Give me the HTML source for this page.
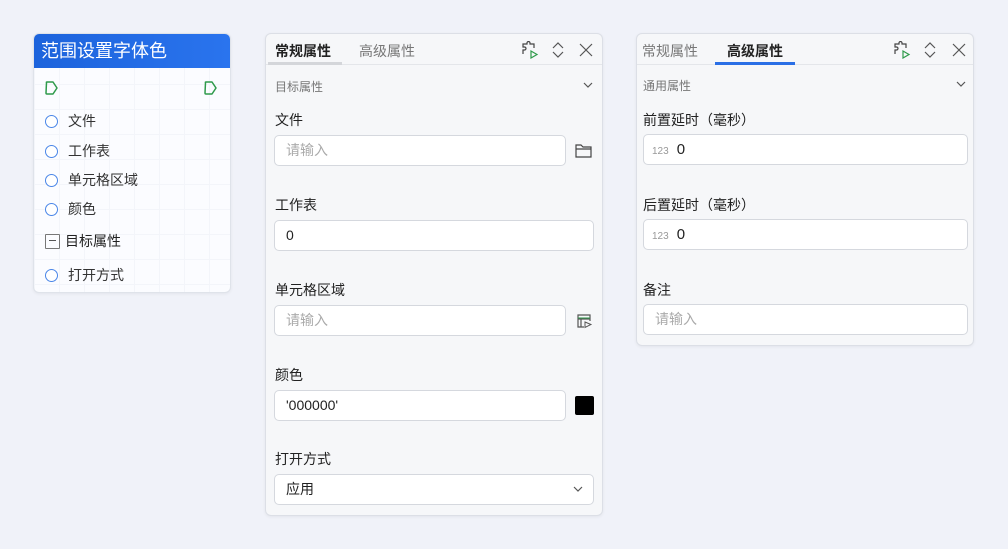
<!DOCTYPE html>
<html><head><meta charset="utf-8"><style>
*{box-sizing:border-box;margin:0;padding:0}
body{width:1008px;height:549px;background:#f0f2f9;font-family:"Liberation Sans","Noto Sans CJK SC",sans-serif;position:relative;overflow:hidden;color:#333}
.abs{position:absolute}
.node{left:33px;top:33px;width:198px;height:260px;border:1px solid #dfe3ea;border-radius:6px;background-color:#fbfcff;background-image:linear-gradient(#f3f5fa 1px,transparent 1px),linear-gradient(90deg,#f3f5fa 1px,transparent 1px);background-size:25px 25px;overflow:hidden;box-shadow:0 1px 3px rgba(0,0,0,.06)}
.nh{height:34px;background:linear-gradient(90deg,#1c63dc,#2a74ee);color:#fff;font-size:18px;line-height:34px;padding-left:7px}
.row{position:absolute;left:11px;font-size:14px;color:#333;display:flex;align-items:center}
.circ{width:13px;height:13px;border:1.5px solid #4a86e8;border-radius:50%;margin-right:10px;background:#fff}
.panel{border:1px solid #dcdfe6;border-radius:6px;background:#f6f7f9;box-shadow:0 1px 3px rgba(0,0,0,.06)}
.tabs{height:31px;border-bottom:1px solid #e4e6ea;position:relative}
.tab{position:absolute;top:7px;font-size:14px;color:#777}
.tab.on{color:#222;font-weight:bold}
.sec{position:absolute;left:9px;font-size:12px;color:#777}
.lbl{position:absolute;left:9px;font-size:14px;color:#222}
.inp{position:absolute;left:8px;height:31px;border:1px solid #d5d8de;border-radius:5px;background:#fff;font-size:14px;line-height:29px;padding-left:11px;color:#222}
.ph{color:#aaa}
</style></head><body>
<div class="abs node">
 <div class="nh">范围设置字体色</div>
 <svg class="abs" style="left:10px;top:46px" width="16" height="16"><path d="M2.5 2.5Q2 2 3 2h6l4 6-4 6H3q-1 0-1-1z" fill="none" stroke="#2e9a4a" stroke-width="1.5" stroke-linejoin="round"/></svg>
 <svg class="abs" style="left:169px;top:46px" width="16" height="16"><path d="M2.5 2.5Q2 2 3 2h6l4 6-4 6H3q-1 0-1-1z" fill="none" stroke="#2e9a4a" stroke-width="1.5" stroke-linejoin="round"/></svg>
 <div class="row" style="top:77px"><span class="circ"></span>文件</div>
 <div class="row" style="top:107px"><span class="circ"></span>工作表</div>
 <div class="row" style="top:136px"><span class="circ"></span>单元格区域</div>
 <div class="row" style="top:165px"><span class="circ"></span>颜色</div>
 <div class="row" style="top:197px;color:#222"><span style="width:15px;height:15px;border:1.5px solid #777;border-radius:1px;margin-right:5px;position:relative;display:inline-block"><span style="position:absolute;left:2.5px;top:5.5px;width:7px;height:1.3px;background:#555"></span></span>目标属性</div>
 <div class="row" style="top:231px"><span class="circ"></span>打开方式</div>
</div>

<div class="abs panel" style="left:265px;top:33px;width:338px;height:483px">
 <div class="tabs">
  <span class="tab on" style="left:9px">常规属性</span>
  <span class="tab" style="left:93px">高级属性</span>
  <div class="abs" style="left:2px;top:28px;width:74px;height:3px;background:#d4d6da"></div>
  <svg class="abs" style="left:254px;top:7px" width="20" height="18"><path d="M3 13V9h1.5a1.5 1.5 0 0 0 0-3H3V3h4V2a1.5 1.5 0 0 1 3 0v1h4v4" fill="none" stroke="#444" stroke-width="1.2"/><path d="M11 10v7l6-3.5z" fill="none" stroke="#2e9a4a" stroke-width="1.2"/></svg>
  <svg class="abs" style="left:285px;top:8px" width="14" height="16"><path d="M2 6l5-5 5 5M2 10l5 5 5-5" fill="none" stroke="#555" stroke-width="1.2"/></svg>
  <svg class="abs" style="left:313px;top:9px" width="14" height="14"><path d="M1 1l12 12M13 1L1 13" stroke="#555" stroke-width="1.2"/></svg>
 </div>
 <span class="sec" style="top:44px">目标属性</span>
 <svg class="abs" style="left:317px;top:48px" width="10" height="7"><path d="M1 1l4 4 4-4" fill="none" stroke="#555" stroke-width="1.2"/></svg>
 <span class="lbl" style="top:76px">文件</span>
 <div class="inp ph" style="top:101px;width:292px">请输入</div>
 <svg class="abs" style="left:309px;top:109px" width="18" height="15"><path d="M1 2h5l2 2h8v10H1z M1 6h15" fill="none" stroke="#444" stroke-width="1.2"/></svg>
 <span class="lbl" style="top:161px">工作表</span>
 <div class="inp" style="top:186px;width:320px">0</div>
 <span class="lbl" style="top:246px">单元格区域</span>
 <div class="inp ph" style="top:271px;width:292px">请输入</div>
 <svg class="abs" style="left:310px;top:279px" width="16" height="16"><path d="M8 14H2V2h12v6M2 6h12M5 6v8" fill="none" stroke="#555" stroke-width="1.2"/><path d="M2 5h12" stroke="#2e9a4a"/><path d="M9 9l6 2.5-6 3z" fill="none" stroke="#555"/></svg>
 <span class="lbl" style="top:331px">颜色</span>
 <div class="inp" style="top:356px;width:292px">'000000'</div>
 <div class="abs" style="left:309px;top:362px;width:19px;height:19px;background:#000;border-radius:2px"></div>
 <span class="lbl" style="top:415px">打开方式</span>
 <div class="inp" style="top:440px;width:320px">应用</div>
 <svg class="abs" style="left:307px;top:452px" width="10" height="7"><path d="M1 1l4 4 4-4" fill="none" stroke="#555" stroke-width="1.2"/></svg>
</div>

<div class="abs panel" style="left:636px;top:33px;width:338px;height:313px">
 <div class="tabs">
  <span class="tab" style="left:5px">常规属性</span>
  <span class="tab on" style="left:90px">高级属性</span>
  <div class="abs" style="left:78px;top:28px;width:80px;height:3px;background:#2a6fe6"></div>
  <svg class="abs" style="left:255px;top:7px" width="20" height="18"><path d="M3 13V9h1.5a1.5 1.5 0 0 0 0-3H3V3h4V2a1.5 1.5 0 0 1 3 0v1h4v4" fill="none" stroke="#444" stroke-width="1.2"/><path d="M11 10v7l6-3.5z" fill="none" stroke="#2e9a4a" stroke-width="1.2"/></svg>
  <svg class="abs" style="left:286px;top:8px" width="14" height="16"><path d="M2 6l5-5 5 5M2 10l5 5 5-5" fill="none" stroke="#555" stroke-width="1.2"/></svg>
  <svg class="abs" style="left:315px;top:9px" width="14" height="14"><path d="M1 1l12 12M13 1L1 13" stroke="#555" stroke-width="1.2"/></svg>
 </div>
 <span class="sec" style="top:43px;left:6px">通用属性</span>
 <svg class="abs" style="left:319px;top:47px" width="10" height="7"><path d="M1 1l4 4 4-4" fill="none" stroke="#555" stroke-width="1.2"/></svg>
 <span class="lbl" style="top:76px;left:6px">前置延时（毫秒）</span>
 <div class="inp" style="top:100px;left:6px;width:325px;padding-left:8px;font-size:15px"><span style="font-size:10px;color:#999;margin-right:8px">123</span>0</div>
 <span class="lbl" style="top:161px;left:6px">后置延时（毫秒）</span>
 <div class="inp" style="top:185px;left:6px;width:325px;padding-left:8px;font-size:15px"><span style="font-size:10px;color:#999;margin-right:8px">123</span>0</div>
 <span class="lbl" style="top:246px;left:6px">备注</span>
 <div class="inp ph" style="top:270px;left:6px;width:325px">请输入</div>
</div>
</body></html>
